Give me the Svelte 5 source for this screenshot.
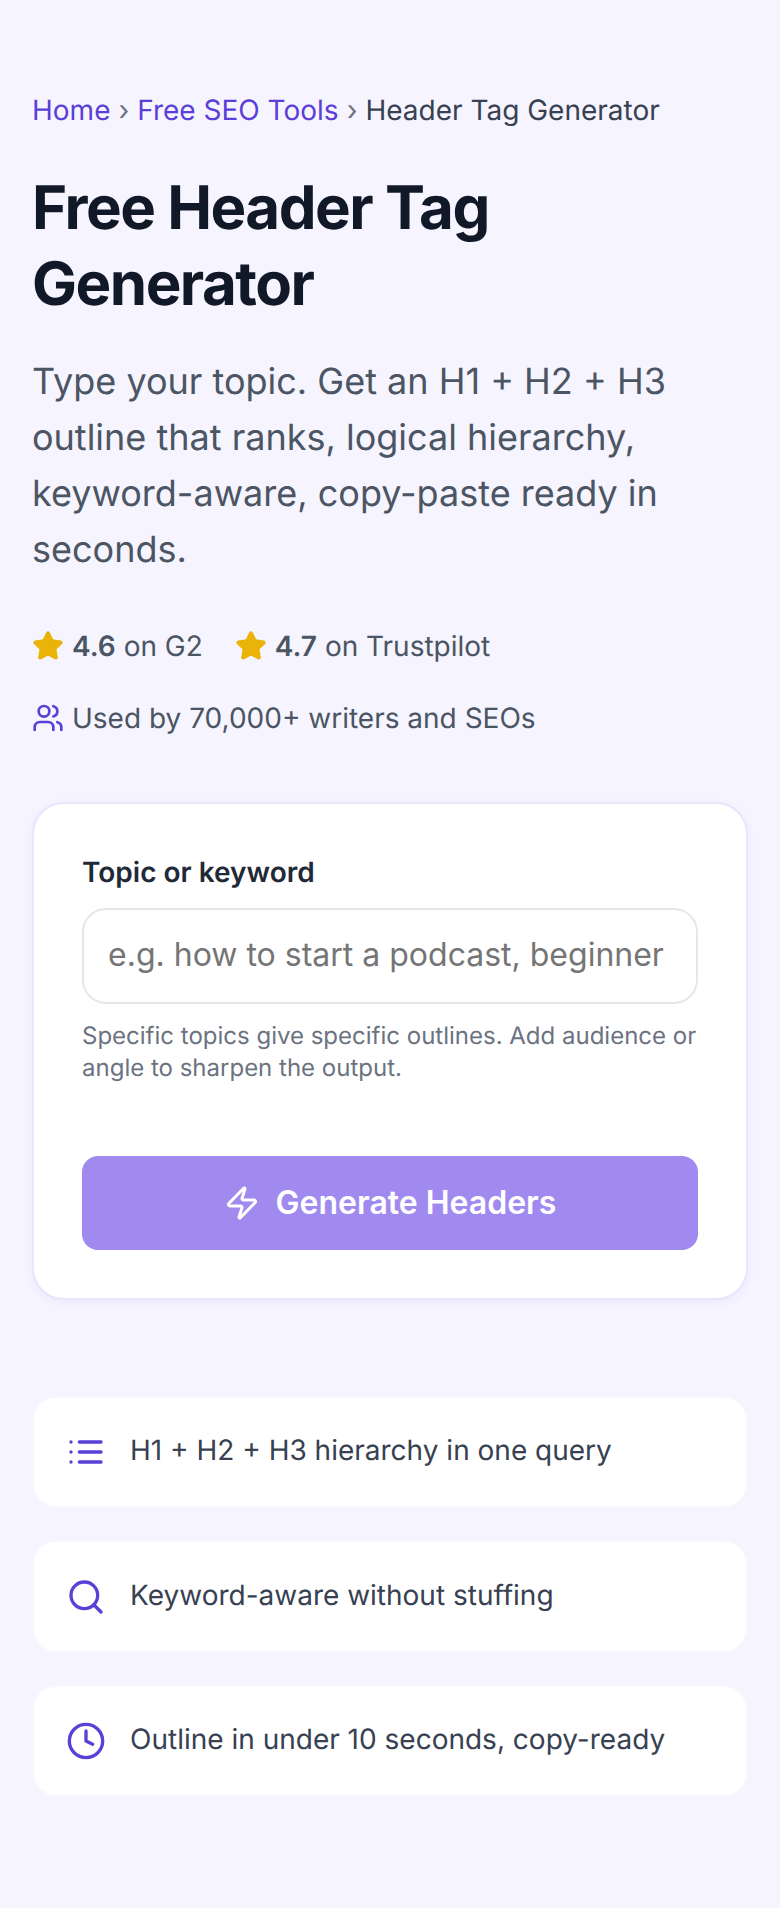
<script>
  const features = [
    { icon: 'list', text: 'H1 + H2 + H3 hierarchy in one query' },
    { icon: 'search', text: 'Keyword-aware without stuffing' },
    { icon: 'clock', text: 'Outline in under 10 seconds, copy-ready' }
  ];
  const star = 'M11.525 2.295a.53.53 0 0 1 .95 0l2.31 4.679a2.123 2.123 0 0 0 1.595 1.16l5.166.756a.53.53 0 0 1 .294.904l-3.736 3.638a2.123 2.123 0 0 0-.611 1.878l.882 5.14a.53.53 0 0 1-.771.56l-4.618-2.428a2.122 2.122 0 0 0-1.973 0L6.396 21.01a.53.53 0 0 1-.77-.56l.881-5.139a2.122 2.122 0 0 0-.611-1.879L2.16 9.795a.53.53 0 0 1 .294-.906l5.165-.755a2.122 2.122 0 0 0 1.597-1.16z';
</script>

<main class="page">
  <nav class="crumbs">
    <a href="#home">Home</a>
    <span class="sep">›</span>
    <a href="#tools">Free SEO Tools</a>
    <span class="sep">›</span>
    <span class="current">Header Tag Generator</span>
  </nav>

  <h1>Free Header Tag Generator</h1>
  <p class="lead">Type your topic. Get an H1 + H2 + H3 outline that ranks, logical hierarchy, keyword-aware, copy-paste ready in seconds.</p>

  <div class="ratings">
    <span class="rating">
      <svg class="star" viewBox="0 0 24 24"><path d={star} /></svg>
      <span><b>4.6</b> on G2</span>
    </span>
    <span class="rating">
      <svg class="star" viewBox="0 0 24 24"><path d={star} /></svg>
      <span><b>4.7</b> on Trustpilot</span>
    </span>
  </div>

  <div class="users">
    <svg class="ico small" viewBox="0 0 24 24">
      <path d="M16 21v-2a4 4 0 0 0-4-4H6a4 4 0 0 0-4 4v2" />
      <circle cx="9" cy="7" r="4" />
      <path d="M22 21v-2a4 4 0 0 0-3-3.87" />
      <path d="M16 3.13a4 4 0 0 1 0 7.75" />
    </svg>
    <span>Used by 70,000+ writers and SEOs</span>
  </div>

  <form class="card" onsubmit={(e) => e.preventDefault()}>
    <label for="topic">Topic or keyword</label>
    <input id="topic" type="text" placeholder="e.g. how to start a podcast, beginner" />
    <p class="hint">Specific topics give specific outlines. Add audience or angle to sharpen the output.</p>
    <button type="submit">
      <svg class="zap" viewBox="0 0 24 24">
        <path d="M4 14a1 1 0 0 1-.78-1.63l9.9-10.2a.5.5 0 0 1 .86.46l-1.92 6.02A1 1 0 0 0 13 10h7a1 1 0 0 1 .78 1.63l-9.9 10.2a.5.5 0 0 1-.86-.46l1.92-6.02A1 1 0 0 0 11 14z" />
      </svg>
      <span>Generate Headers</span>
    </button>
  </form>

  <ul class="features">
    {#each features as f}
      <li>
        <svg class="ico" viewBox="0 0 24 24">
          {#if f.icon === 'list'}
            <path d="M3 12h.01M3 18h.01M3 6h.01M8 12h13M8 18h13M8 6h13" />
          {:else if f.icon === 'search'}
            <path d="m21 21-4.34-4.34" /><circle cx="11" cy="11" r="8" />
          {:else}
            <circle cx="12" cy="12" r="10" /><path d="M12 6v6l4 2" />
          {/if}
        </svg>
        <span class="label">{f.text}</span>
      </li>
    {/each}
  </ul>
</main>

<style>
  :global(body) {
    margin: 0;
    background: #f6f4ff;
  }
  .page {
    box-sizing: border-box;
    min-height: 1908px;
    padding: 88px 32px 0;
    background: #f6f4ff;
    font-family: Inter, "Liberation Sans", sans-serif;
    font-size: 28px;
    line-height: 44.8px;
    color: #4b5563;
    text-rendering: geometricPrecision;
  }
  .crumbs {
    display: flex;
    gap: 8px;
    color: #6b7280;
  }
  .crumbs a {
    color: #5b3fd6;
    text-decoration: none;
  }
  .current {
    color: #374151;
  }
  h1 {
    margin: 37px 0 31px;
    font-size: 60px;
    line-height: 76px;
    font-weight: 700;
    letter-spacing: -0.025em;
    color: #111827;
  }
  .lead {
    margin: 0 0 47px;
    font-size: 36px;
    line-height: 56px;
    color: #4b5563;
  }
  .ratings {
    display: flex;
    gap: 32px;
  }
  .rating,
  .users {
    display: flex;
    align-items: center;
    gap: 8px;
  }
  .rating b {
    font-weight: 600;
  }
  .star {
    width: 32px;
    height: 32px;
    flex: none;
    fill: #eab308;
    stroke: #eab308;
    stroke-width: 2;
    stroke-linecap: round;
    stroke-linejoin: round;
  }
  .users {
    margin-top: 27px;
  }
  .ico {
    width: 40px;
    height: 40px;
    flex: none;
    fill: none;
    stroke: #5b3fd6;
    stroke-width: 2;
    stroke-linecap: round;
    stroke-linejoin: round;
  }
  .ico.small {
    width: 32px;
    height: 32px;
  }
  .card {
    display: block;
    margin-top: 61.6px;
    padding: 48px;
    background: #fff;
    border: 2px solid #e9e5fc;
    border-radius: 32px;
    box-shadow: 0 2px 8px rgba(91, 63, 214, 0.06);
  }
  label {
    display: block;
    margin-bottom: 16px;
    font-size: 28px;
    line-height: 40px;
    font-weight: 600;
    color: #1f2937;
  }
  input {
    display: block;
    box-sizing: border-box;
    width: 100%;
    height: 96px;
    padding: 0 24px 2px;
    font: inherit;
    font-size: 32px;
    background: #fff;
    border: 2px solid #e5e7eb;
    border-radius: 24px;
    outline: none;
  }
  .hint {
    margin: 16px 0 72px;
    font-size: 24px;
    line-height: 32px;
    color: #6b7280;
  }
  button {
    display: flex;
    align-items: center;
    justify-content: center;
    gap: 16px;
    width: 100%;
    height: 94px;
    padding: 0;
    border: 0;
    border-radius: 16px;
    background: #a08aef;
    color: #fff;
    font: inherit;
    font-size: 32px;
    font-weight: 600;
  }
  .zap {
    width: 36px;
    height: 36px;
    fill: none;
    stroke: #fff;
    stroke-width: 2;
    stroke-linecap: round;
    stroke-linejoin: round;
  }
  .features {
    list-style: none;
    margin: 96px 0 0;
    padding: 0;
    display: flex;
    flex-direction: column;
    gap: 32px;
  }
  .features li {
    display: flex;
    align-items: center;
    gap: 24px;
    height: 112.4px;
    padding: 0 32px;
    background: #fff;
    border: 2px solid #f8f6ff;
    border-radius: 24px;
    box-sizing: border-box;
    color: #374151;
  }
  .label {
    margin-bottom: 3px;
  }
</style>
